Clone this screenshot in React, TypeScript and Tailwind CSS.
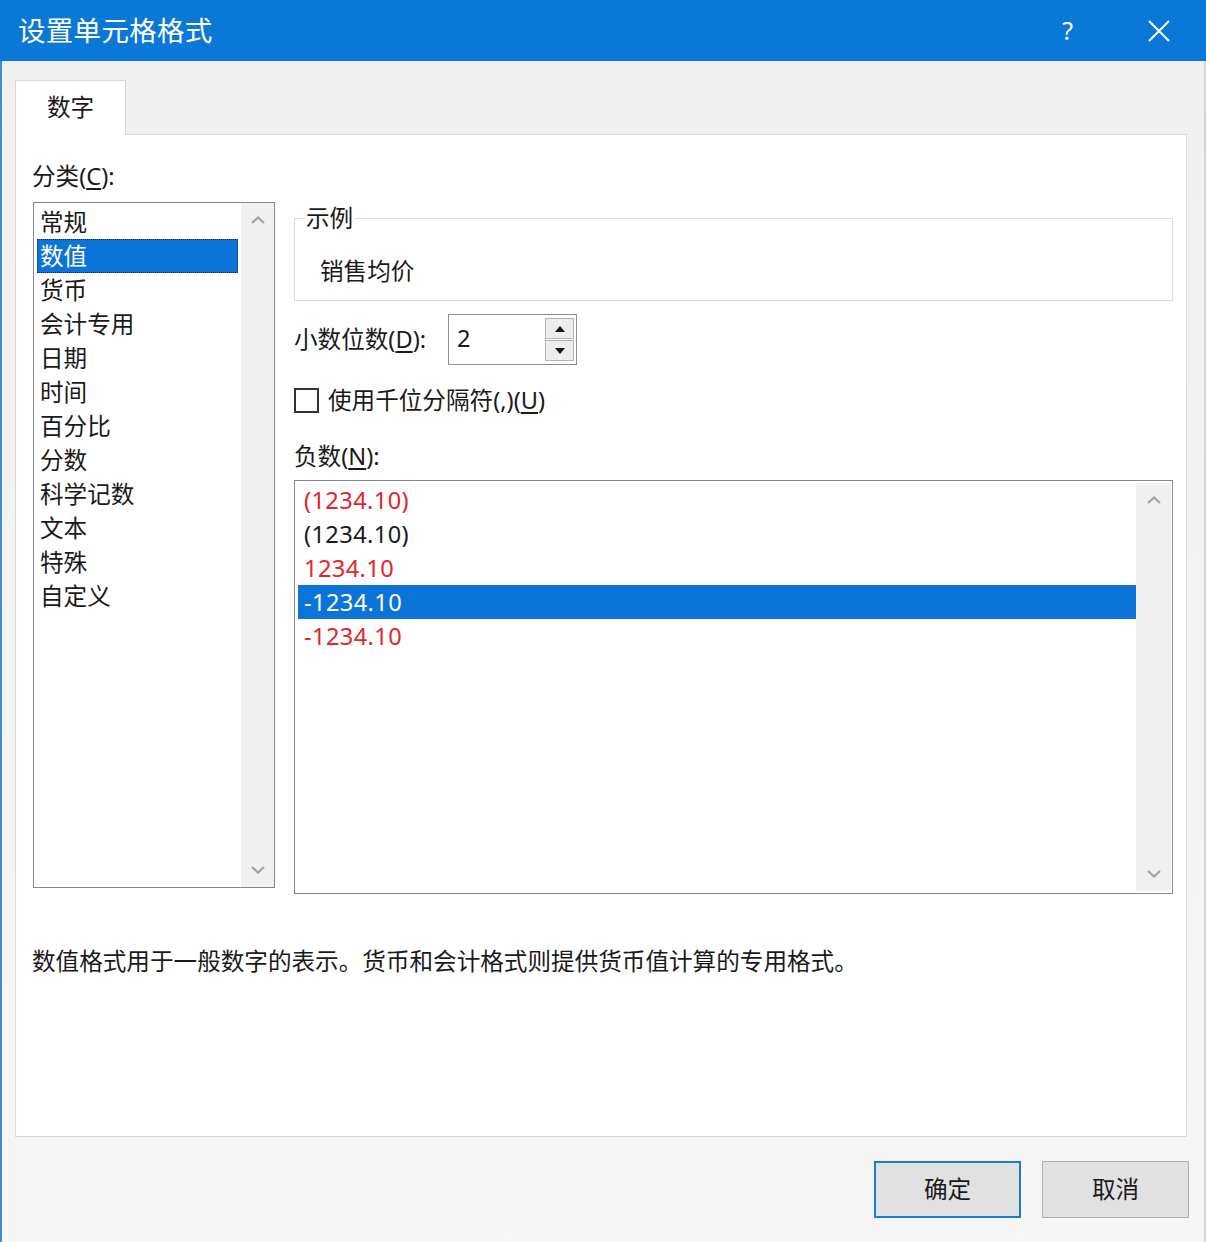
import React from "react";

const font = "font-['Noto_Sans','Noto_Sans_CJK_SC',sans-serif]";

function ChevronUp() {
  return (
    <svg width="16" height="10" viewBox="0 0 16 10" fill="none">
      <path d="M2 8 L8 2.5 L14 8" stroke="#a3a3a3" strokeWidth="2.2" />
    </svg>
  );
}
function ChevronDown() {
  return (
    <svg width="16" height="10" viewBox="0 0 16 10" fill="none">
      <path d="M2 2 L8 7.5 L14 2" stroke="#a3a3a3" strokeWidth="2.2" />
    </svg>
  );
}

const categories = ["常规", "数值", "货币", "会计专用", "日期", "时间", "百分比", "分数", "科学记数", "文本", "特殊", "自定义"];

const negatives: { text: string; red: boolean }[] = [
  { text: "(1234.10)", red: true },
  { text: "(1234.10)", red: false },
  { text: "1234.10", red: true },
  { text: "-1234.10", red: false },
  { text: "-1234.10", red: true },
];

export default function App() {
  return (
    <div className={`${font} w-[1206px] h-[1242px] bg-[#f0f0f0] flex flex-col text-[#1a1a1a] overflow-hidden`}>
      {/* Title bar */}
      <div className="h-[61px] bg-[#0a78d7] flex items-center pl-[18px] pr-[36px] text-white shrink-0">
        <div className="text-[27.5px] leading-none tracking-[0.3px]">设置单元格格式</div>
        <div className="ml-auto flex items-center gap-[75px]">
          <span className="text-[25px] leading-none font-['Noto_Sans',sans-serif]">?</span>
          <svg width="22" height="22" viewBox="0 0 22 22">
            <path d="M1 1 L21 21 M21 1 L1 21" stroke="white" strokeWidth="2" />
          </svg>
        </div>
      </div>

      <div className="flex-1 flex flex-col border-l-2 border-l-[#3d8ad6] border-r-2 border-r-[#d5d5d5] bg-gradient-to-b from-[#f0f0f0] to-[#f6f6f6]">
        {/* Tab */}
        <div className="pl-[13px] pr-[17px] pt-[19px]">
          <div className="relative z-10 w-[111px] h-[55px] bg-white border border-[#d9d9d9] border-b-0 flex items-center justify-center text-[23.6px] -mb-px">
            数字
          </div>
          {/* Panel */}
          <div className="h-[1003px] bg-white border border-[#d9d9d9] pl-[16px] pt-[26px] flex flex-col">
            <div className="flex items-start">
              {/* Left column */}
              <div className="w-[243px] flex flex-col">
                <div className="h-[30px] leading-[30px] text-[23.6px]">
                  分类(<span className="underline underline-offset-[3px]">C</span>):
                </div>
                <div className="mt-[11px] ml-px h-[686px] border border-[#828790] bg-white flex">
                  <div className="flex-1 pt-[2px] pl-[3px] pr-[3px]">
                    {categories.map((c) => (
                      <div
                        key={c}
                        className={
                          c === "数值"
                            ? "h-[34px] leading-[34px] text-[23.6px] pl-[3px] bg-[#0a74d8] text-white outline-1 outline-dotted outline-[#2a2a2a] -outline-offset-1"
                            : "h-[34px] leading-[34px] text-[23.6px] pl-[3px]"
                        }
                      >
                        {c}
                      </div>
                    ))}
                  </div>
                  <div className="w-[33px] bg-[#f0f0f0] flex flex-col items-center justify-between py-[12px]">
                    <ChevronUp />
                    <ChevronDown />
                  </div>
                </div>
              </div>

              {/* Right column */}
              <div className="ml-[19px] w-[879px] flex flex-col mt-[43px]">
                <fieldset className="border border-[#dcdcdc] h-[97px] pl-[25px] pr-[10px]">
                  <legend className="ml-[-15px] px-[1px] text-[23.6px] leading-[28px]">示例</legend>
                  <div className="text-[23.6px] leading-[28px] mt-[25px]">销售均价</div>
                </fieldset>

                <div className="mt-[13px] flex items-center">
                  <div className="w-[154px] text-[23.6px] leading-[30px] -translate-y-px">
                    小数位数(<span className="underline underline-offset-[3px]">D</span>):
                  </div>
                  <div className="w-[129px] h-[51px] border border-[#8f8f8f] bg-white flex items-center pl-[8px] pr-[2px]">
                    <span className="text-[23.6px] flex-1 -translate-y-px">2</span>
                    <div className="flex flex-col gap-[1px] w-[29px] h-[43px]">
                      <div className="flex-1 bg-[#ececec] border border-[#b4b4b4] flex items-center justify-center">
                        <svg width="10" height="6" viewBox="0 0 10 6"><path d="M0 6 L5 0 L10 6 Z" fill="#111" /></svg>
                      </div>
                      <div className="flex-1 bg-[#ececec] border border-[#b4b4b4] flex items-center justify-center">
                        <svg width="10" height="6" viewBox="0 0 10 6"><path d="M0 0 L5 6 L10 0 Z" fill="#111" /></svg>
                      </div>
                    </div>
                  </div>
                </div>

                <div className="mt-[20px] flex items-center">
                  <div className="w-[25px] h-[25px] border-2 border-[#333] bg-white" />
                  <div className="ml-[9px] text-[23.6px] leading-[30px]">
                    使用千位分隔符(,)(<span className="underline underline-offset-[3px]">U</span>)
                  </div>
                </div>

                <div className="mt-[26px] h-[30px] leading-[30px] text-[23.6px]">
                  负数(<span className="underline underline-offset-[3px]">N</span>):
                </div>

                <div className="mt-[9px] h-[414px] border border-[#828790] bg-white flex">
                  <div className="flex-1 pt-[2px] pl-[3px]">
                    {negatives.map((n, i) => (
                      <div
                        key={i}
                        className={
                          i === 3
                            ? "h-[34px] leading-[34px] text-[23.6px] tracking-[0.4px] pl-[6px] bg-[#0a74d8] text-white"
                            : n.red
                            ? "h-[34px] leading-[34px] text-[23.6px] tracking-[0.4px] pl-[6px] text-[#e3242b]"
                            : "h-[34px] leading-[34px] text-[23.6px] tracking-[0.4px] pl-[6px] text-[#1a1a1a]"
                        }
                      >
                        {n.text}
                      </div>
                    ))}
                  </div>
                  <div className="w-[35px] my-[2px] mr-[1px] bg-[#f0f0f0] flex flex-col items-center justify-between py-[12px]">
                    <ChevronUp />
                    <ChevronDown />
                  </div>
                </div>
              </div>
            </div>

            <div className="mt-[52px] text-[23.6px] leading-[30px]">
              数值格式用于一般数字的表示。货币和会计格式则提供货币值计算的专用格式。
            </div>
          </div>
        </div>

        {/* Buttons */}
        <div className="mt-[24px] flex justify-end gap-[21px] pr-[15px]">
          <button className="w-[147px] h-[57px] bg-[#e1e1e1] border-2 border-[#1a7bd6] text-[23.6px] text-[#1a1a1a]">
            确定
          </button>
          <button className="w-[147px] h-[57px] bg-[#e1e1e1] border border-[#adadad] text-[23.6px] text-[#1a1a1a]">
            取消
          </button>
        </div>
      </div>
    </div>
  );
}
